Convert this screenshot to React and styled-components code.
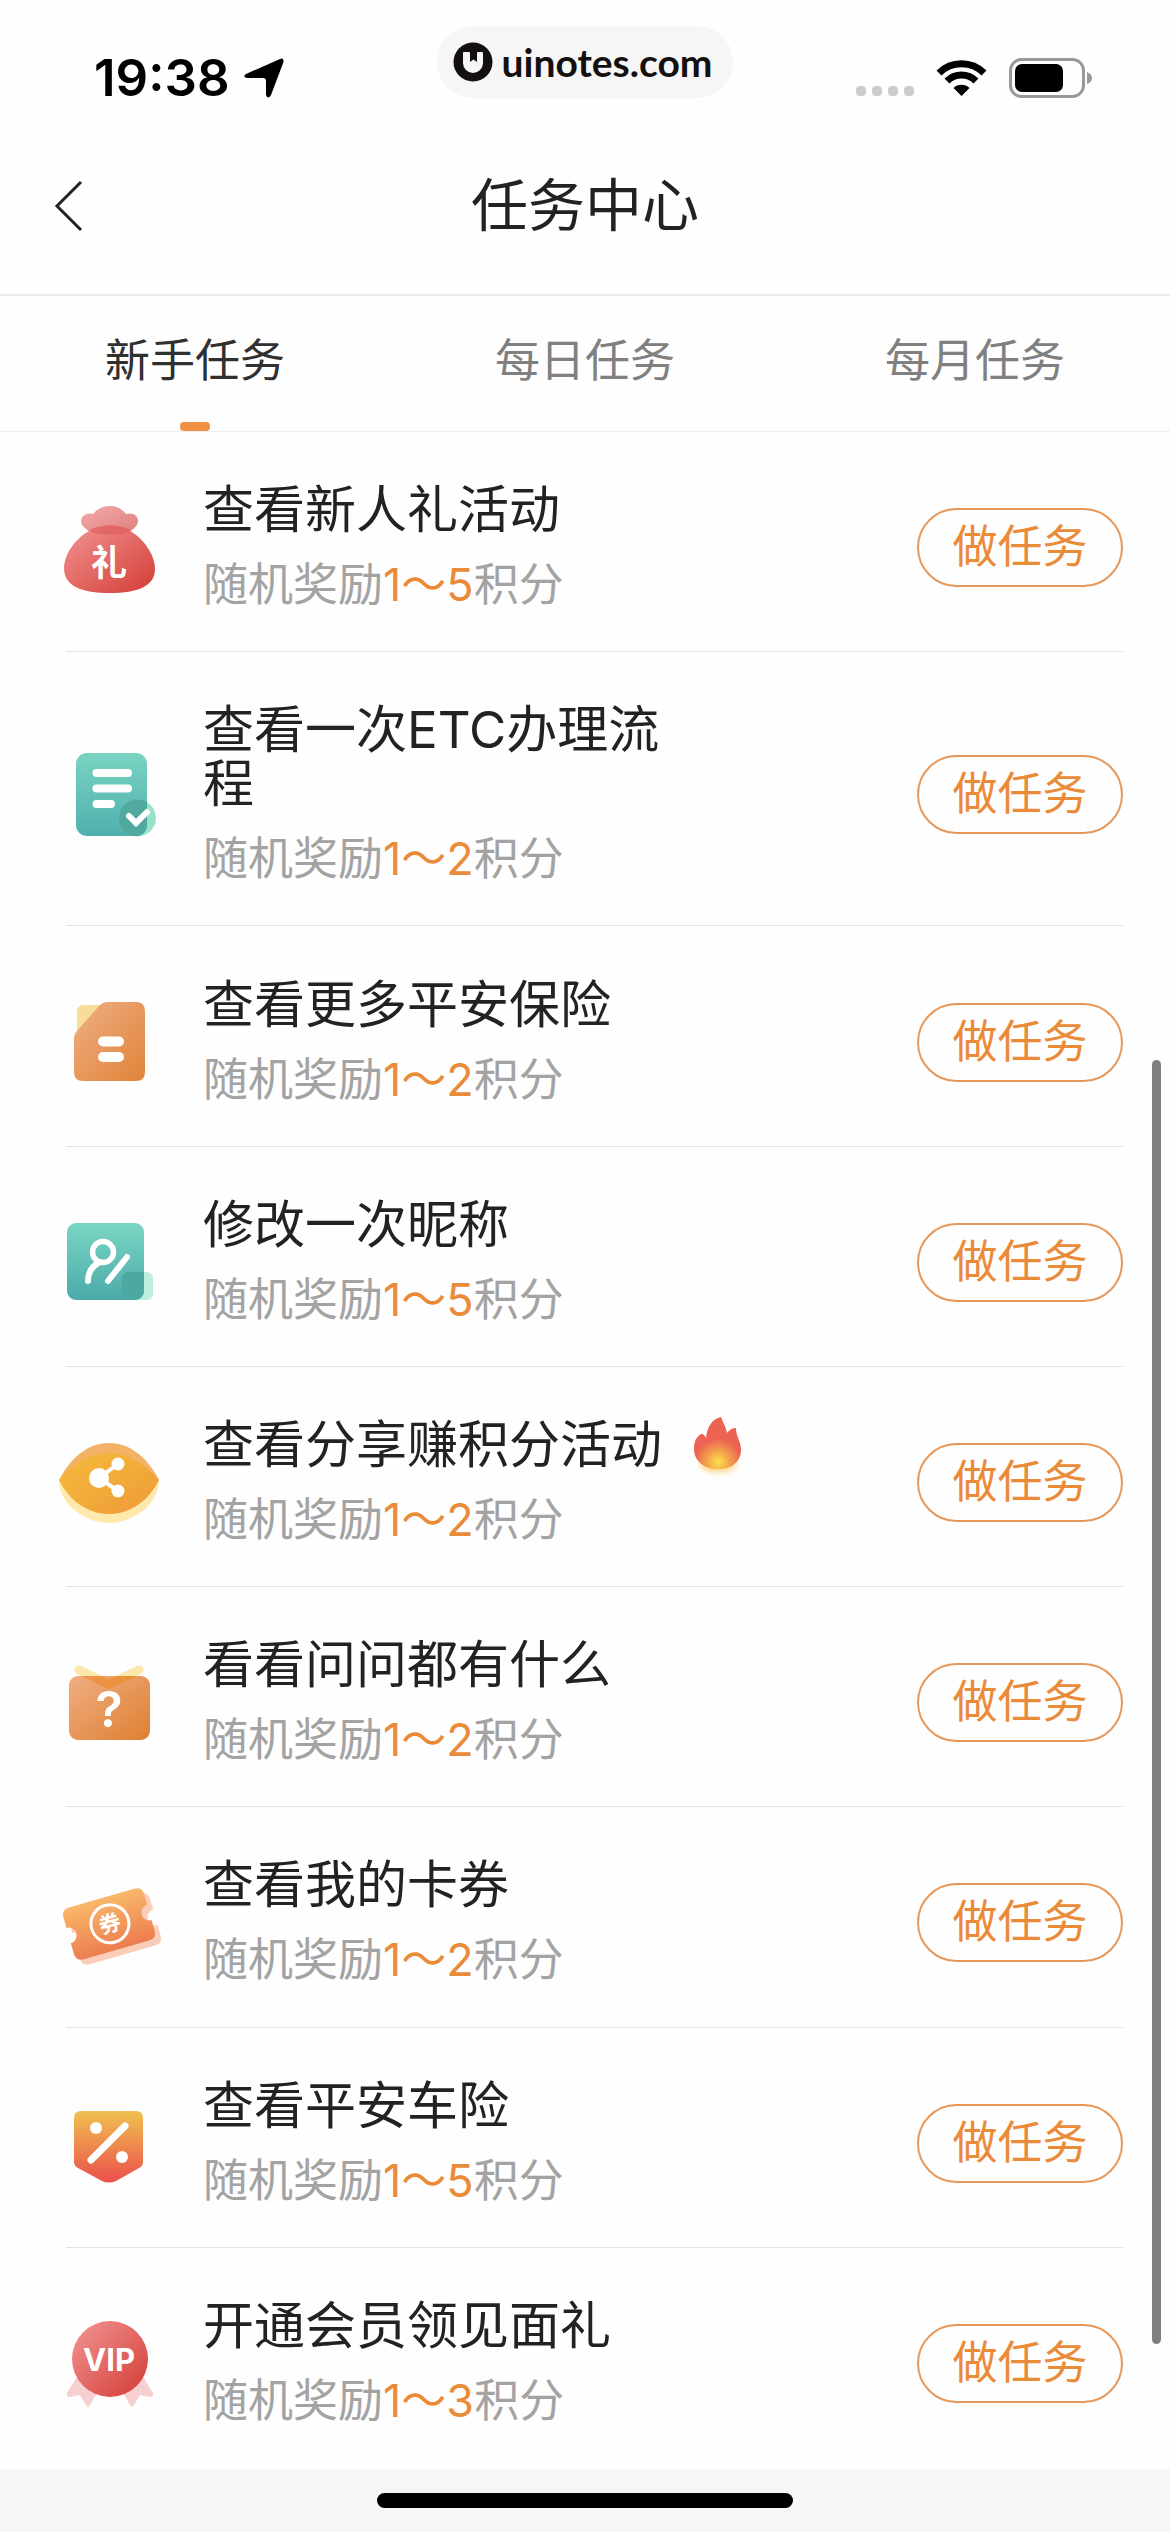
import React from "react";
import styled, { createGlobalStyle } from "styled-components";

const GlobalStyle = createGlobalStyle`
  * { box-sizing: border-box; }
  body {
    margin: 0;
    background: #fefefe;
    font-family: Inter, "Noto Sans CJK SC", sans-serif;
    color: #222;
  }
  button { font: inherit; background: none; border: 0; padding: 0; cursor: pointer; }
  h1, h2, p, ul { margin: 0; padding: 0; font-weight: 400; }
`;

const Page = styled.div`
  position: relative;
  display: flex;
  flex-direction: column;
  min-height: 100vh;
`;

const StatusBar = styled.div`
  display: grid;
  grid-template-columns: 1fr auto 1fr;
  align-items: center;
  height: 124px;
  padding: 0 78px;
`;

const Clock = styled.div`
  display: flex;
  align-items: center;
  gap: 14px;
  padding: 32px 0 0 16px;
  font-size: 51px;
  line-height: 60px;
  font-weight: 600;
  color: #000;
`;

const SiteBadge = styled.div`
  display: flex;
  align-items: center;
  gap: 8px;
  height: 72px;
  padding: 0 20px 0 16px;
  border-radius: 36px;
  background: #f6f6f6;
  color: #151010;
  font: 700 39px/44px Lato, sans-serif;
`;

const Indicators = styled.div`
  display: flex;
  align-items: center;
  justify-content: flex-end;
  gap: 22px;
  padding-top: 32px;
`;

const Header = styled.header`
  display: grid;
  grid-template-columns: 1fr auto 1fr;
  align-items: center;
  height: 172px;
  padding: 0 54px 6px;
  border-bottom: 2px solid #ececec;
`;

const BackButton = styled.button`
  display: flex;
  justify-self: start;
`;

const PageTitle = styled.h1`
  font-size: 57px;
  line-height: 80px;
`;

const Tabs = styled.nav`
  display: grid;
  grid-template-columns: repeat(3, 1fr);
  height: 136px;
  border-bottom: 1px solid #eee;
`;

const Tab = styled.button`
  display: flex;
  flex-direction: column;
  align-items: center;
  justify-content: space-between;
  padding-top: 35px;
  font-size: 45px;
  line-height: 60px;
  color: ${(p) => (p.$active ? "#303030" : "#808080")};

  &::after {
    content: "";
    width: 30px;
    height: 9px;
    border-radius: 4px;
    background: ${(p) => (p.$active ? "#ee9145" : "transparent")};
  }
`;

const TaskList = styled.ul`
  flex: 1;
  display: flex;
  flex-direction: column;
  padding: 0 47px 2px 66px;
  list-style: none;
`;

const TaskRow = styled.li`
  flex: 1 0 auto;
  display: flex;
  align-items: center;
  padding: 51px 0 39px;
  border-bottom: 1px solid #e2e2e2;

  &:last-child { border-bottom-color: transparent; }
`;

const TaskIcon = styled.svg`
  flex: none;
  width: 120px;
  height: 120px;
  margin: -20px 33px -20px -16px;
`;

const TaskInfo = styled.div`
  flex: 1;
  display: flex;
  flex-direction: column;
  gap: 21px;
`;

const TitleLine = styled.div`
  display: flex;
  align-items: center;
  gap: 28px;
`;

const TaskTitle = styled.h2`
  max-width: 480px;
  font-size: 51px;
  line-height: 54px;
`;

const FlameIcon = styled.svg`
  width: 56px;
  height: 64px;
  margin: -4px 0 -6px;
`;

const Reward = styled.p`
  font-size: 45px;
  line-height: 54px;
  color: #a3a3a3;
`;

const Points = styled.span`
  color: #ea8b3a;
`;

const DoTaskButton = styled.button`
  flex: none;
  width: 206px;
  height: 79px;
  padding-bottom: 1px;
  border: 2px solid #e6985a;
  border-radius: 40px;
  font-size: 45px;
  line-height: 60px;
  color: #ea8b3a;
`;

const HomeArea = styled.footer`
  display: flex;
  justify-content: center;
  height: 62px;
  padding-top: 23px;
  background: #f5f7f6;
`;

const HomeIndicator = styled.div`
  width: 416px;
  height: 15px;
  border-radius: 8px;
  background: #000;
`;

const ScrollThumb = styled.div`
  position: absolute;
  top: 1060px;
  right: 9px;
  width: 9px;
  height: 1284px;
  border-radius: 5px;
  background: #808080;
`;

function Gradient({ id, from, to, vertical }) {
  return (
    <linearGradient id={id} x1="0" y1="0" x2={vertical ? "0" : "1"} y2="1">
      <stop offset="0" stopColor={from} />
      <stop offset="1" stopColor={to} />
    </linearGradient>
  );
}

const iconText = {
  fill: "#fff",
  textAnchor: "middle",
  fontFamily: 'Inter, "Noto Sans CJK SC", sans-serif',
};

const icons = {
  gift: (
    <>
      <Gradient id="gift" from="#f29593" to="#d43c36" />
      <Gradient id="giftTop" from="#f3a9a8" to="#dd7f7c" />
      <path d="M60 18C67 18 72 21 76 26C83 24 88 28 88 33C88 39 81 42 77 46C72 50 47 50 43 46C38 42 31 39 31 33C31 28 37 24 43 26C47 21 53 18 60 18Z" fill="url(#giftTop)" />
      <path d="M60 37C84 37 105 62 105 81C105 98 88 105 60 105C31 105 14 98 14 80C14 61 36 37 60 37Z" fill="url(#gift)" />
      <path d="M39 42C50 36 70 36 81 42C75 48 45 48 39 42Z" fill="#d9534f" opacity=".5" />
      <text {...iconText} x="59" y="88" fontSize="36" fontWeight="700">礼</text>
    </>
  ),
  doc: (
    <>
      <Gradient id="doc" from="#7ad3c2" to="#50b0ae" vertical />
      <clipPath id="docClip"><rect x="26" y="18" width="71" height="83" rx="11" /></clipPath>
      <circle cx="87.500" cy="83" r="18.500" fill="#98e2ca" />
      <rect x="26" y="18" width="71" height="83" rx="11" fill="url(#doc)" />
      <circle cx="87.500" cy="83" r="18.500" fill="#50a89e" clipPath="url(#docClip)" />
      <path d="M46.500 38H78M46.500 53.500H78M46.500 69H61" stroke="#fff" strokeWidth="8" strokeLinecap="round" />
      <path d="M79 81L86 88L97 77" fill="none" stroke="#fff" strokeWidth="6" strokeLinecap="round" />
    </>
  ),
  policy: (
    <>
      <Gradient id="policy" from="#efaf84" to="#e08338" />
      <rect x="27" y="23" width="40" height="50" rx="6" fill="#f8dc9c" />
      <path d="M57 20H86Q95 20 95 29V90Q95 99 86 99H33Q24 99 24 90V56Q24 52 27 49L50 23Q53 20 57 20Z" fill="url(#policy)" />
      <path d="M53 59.500H69M53 75H69" stroke="#fff" strokeWidth="10" strokeLinecap="round" />
    </>
  ),
  nickname: (
    <>
      <Gradient id="nick" from="#7ad5c3" to="#4cabaa" vertical />
      <clipPath id="nickClip"><rect x="17" y="21" width="77" height="77" rx="9" /></clipPath>
      <rect x="72" y="70" width="31" height="28" rx="6" fill="#bdeedf" />
      <rect x="17" y="21" width="77" height="77" rx="9" fill="url(#nick)" />
      <rect x="72" y="70" width="31" height="28" rx="6" fill="#4da8a1" clipPath="url(#nickClip)" />
      <g fill="none" stroke="#fff" strokeLinecap="round">
        <circle cx="53" cy="50" r="10.500" strokeWidth="5.500" />
        <path d="M50 60Q38 66 38 79M58 79L77 55" strokeWidth="6" />
      </g>
    </>
  ),
  share: (
    <>
      <Gradient id="share" from="#f5bb3c" to="#ee9a37" />
      <path d="M9 60C11 84 36 101 59 101C82 101 107 84 109 60Z" fill="#fde9ab" />
      <path d="M9 58C22 33 40 21 59 21C78 21 96 33 109 58C94 80 78 88 59 88C40 88 24 80 9 58Z" fill="#f3b266" />
      <path d="M9 58C26 39 42 31 59 31C76 31 92 39 109 58C98 80 79 92 59 92C39 92 20 80 9 58Z" fill="url(#share)" />
      <path d="M68 42L49 56L68 69" fill="none" stroke="#fff" strokeWidth="4" />
      <circle cx="49" cy="56" r="10" fill="#fff" />
      <circle cx="68" cy="42" r="6.500" fill="#fff" />
      <circle cx="68" cy="69" r="6.500" fill="#fff" />
    </>
  ),
  ask: (
    <>
      <Gradient id="ask" from="#f0ae82" to="#de7f31" />
      <clipPath id="askClip"><rect x="19" y="33" width="81" height="64" rx="9" /></clipPath>
      <path d="M29 27L59 41L89 27" fill="none" stroke="#fce8aa" strokeWidth="9" strokeLinecap="round" />
      <rect x="19" y="33" width="81" height="64" rx="9" fill="url(#ask)" />
      <g clipPath="url(#askClip)" fill="none" stroke="#ec8a25" strokeWidth="9" strokeLinecap="round" opacity=".6">
        <path d="M29 27L58 41" />
        <path d="M59 41L89 27" />
      </g>
      <text {...iconText} x="59" y="84" fontSize="50" fontWeight="600">?</text>
    </>
  ),
  coupon: (
    <>
      <Gradient id="coupon" from="#f9b869" to="#ec7d50" vertical />
      <g transform="translate(65 66) rotate(-16)">
        <path d="M-34 -27H34Q42 -27 42 -19V-8A8 8 0 0 0 42 8V19Q42 27 34 27H-34Q-42 27 -42 19V8A8 8 0 0 0 -42 -8V-19Q-42 -27 -34 -27Z" fill="#f9cdb8" />
      </g>
      <g transform="translate(59 61) rotate(-16)">
        <path d="M-34 -27H34Q42 -27 42 -19V-8A8 8 0 0 0 42 8V19Q42 27 34 27H-34Q-42 27 -42 19V8A8 8 0 0 0 -42 -8V-19Q-42 -27 -34 -27Z" fill="url(#coupon)" />
        <circle cx="1" cy="0" r="19" fill="none" stroke="#fff" strokeWidth="3" />
        <text {...iconText} x="1" y="8" fontSize="22" fontWeight="700">券</text>
      </g>
    </>
  ),
  percent: (
    <>
      <Gradient id="pct" from="#f0c150" to="#ea4f4c" vertical />
      <path d="M31 28H86Q93 28 93 35V79Q93 83 89 85L66 98Q59 101 52 98L28 85Q24 83 24 79V35Q24 28 31 28Z" fill="url(#pct)" />
      <path d="M41 77L75 43" stroke="#fff" strokeWidth="7" strokeLinecap="round" />
      <circle cx="46" cy="45" r="6" fill="#fff" />
      <circle cx="72" cy="74" r="6" fill="#fff" />
    </>
  ),
  vip: (
    <>
      <Gradient id="vip" from="#f29795" to="#d33a34" />
      <path d="M28 72L17 90Q16 94 20 94L30 92L36 102Q38 105 40 102L48 88ZM92 72L103 90Q104 94 100 94L90 92L84 102Q82 105 80 102L72 88Z" fill="#f6d0d0" />
      <circle cx="60" cy="56" r="38" fill="url(#vip)" />
      <text {...iconText} x="59" y="68" fontSize="31" fontWeight="700">VIP</text>
    </>
  ),
};

const tasks = [
  { icon: "gift", title: "查看新人礼活动", points: "1～5" },
  { icon: "doc", title: "查看一次ETC办理流程", points: "1～2" },
  { icon: "policy", title: "查看更多平安保险", points: "1～2" },
  { icon: "nickname", title: "修改一次昵称", points: "1～5" },
  { icon: "share", title: "查看分享赚积分活动", points: "1～2", hot: true },
  { icon: "ask", title: "看看问问都有什么", points: "1～2" },
  { icon: "coupon", title: "查看我的卡券", points: "1～2" },
  { icon: "percent", title: "查看平安车险", points: "1～5" },
  { icon: "vip", title: "开通会员领见面礼", points: "1～3" },
];

const tabs = ["新手任务", "每日任务", "每月任务"];

function Flame() {
  return (
    <FlameIcon viewBox="0 0 56 64" aria-hidden="true">
      <defs>
        <radialGradient id="flame" cx="28" cy="48" r="26" gradientUnits="userSpaceOnUse">
          <stop offset="0" stopColor="#fbe14a" />
          <stop offset=".45" stopColor="#f3a04c" />
          <stop offset=".9" stopColor="#ec6253" />
        </radialGradient>
        <filter id="glow" x="-50%" y="-50%" width="200%" height="200%">
          <feGaussianBlur stdDeviation="3" />
        </filter>
      </defs>
      <ellipse cx="28" cy="50" rx="18" ry="8" fill="#fbd27c" filter="url(#glow)" />
      <path d="M31 3C33 9 36 13 37 19C39 16 42 14 46 14C46 23 51 27 51 36C51 48 41 55 28 55C14 55 4 47 4 35C4 28 6 23 11 20C14 20 15 22 16 24C17 13 22 5 31 3Z" fill="url(#flame)" />
    </FlameIcon>
  );
}

export default function App() {
  const [active, setActive] = React.useState(0);
  return (
    <Page>
      <GlobalStyle />
      <StatusBar>
        <Clock>
          19:38
          <svg width="40" height="40" viewBox="0 0 40 40" aria-hidden="true">
            <path d="M36 1Q40 -1 39.500 4L27 37Q24 42 22 37V23Q22 20 19 20H3Q-2 19 2 16Z" fill="#000" />
          </svg>
        </Clock>
        <SiteBadge>
          <svg width="40" height="40" viewBox="0 0 40 40" aria-hidden="true">
            <circle cx="20" cy="20" r="19.500" fill="#151010" />
            <path d="M11 10H16Q17 10 17 11V20L20.500 17.500L24 20V11Q24 10 25 10H29Q30 10 30 11V21A10 10 0 0 1 10 21V11Q10 10 11 10Z" fill="#f6f6f6" />
          </svg>
          uinotes.com
        </SiteBadge>
        <Indicators>
          <svg width="58" height="38" viewBox="0 0 58 38" aria-hidden="true">
            <g fill="#ccc">
              <rect x="0" y="27" width="10" height="10" rx="4" />
              <rect x="16" y="27" width="10" height="10" rx="4" />
              <rect x="32" y="27" width="10" height="10" rx="4" />
              <rect x="48" y="27" width="10" height="10" rx="4" />
            </g>
          </svg>
          <svg width="51" height="38" viewBox="0 0 51 38" aria-hidden="true">
            <g fill="none" stroke="#000" strokeWidth="7">
              <path d="M3 14A32 32 0 0 1 48 14" />
              <path d="M11 22A20.500 20.500 0 0 1 40 22" />
            </g>
            <path d="M25.500 37L17.500 29A11.500 11.500 0 0 1 33.500 29Z" fill="#000" />
          </svg>
          <svg width="83" height="40" viewBox="0 0 83 40" aria-hidden="true">
            <rect x="1.500" y="1.500" width="73" height="37" rx="11" fill="none" stroke="#999" strokeWidth="3" />
            <rect x="6" y="6" width="48" height="28" rx="7" fill="#000" />
            <path d="M78 14Q83 16 83 20Q83 24 78 26Z" fill="#999" />
          </svg>
        </Indicators>
      </StatusBar>

      <Header>
        <BackButton type="button" aria-label="返回">
          <svg width="30" height="52" viewBox="0 0 30 52" aria-hidden="true">
            <path d="M27 2L3 26L27 50" fill="none" stroke="#222" strokeWidth="3" />
          </svg>
        </BackButton>
        <PageTitle>任务中心</PageTitle>
      </Header>

      <Tabs>
        {tabs.map((label, i) => (
          <Tab key={label} type="button" $active={i === active} onClick={() => setActive(i)}>
            {label}
          </Tab>
        ))}
      </Tabs>

      <TaskList>
        {tasks.map((task) => (
          <TaskRow key={task.title}>
            <TaskIcon viewBox="0 0 120 120" aria-hidden="true">{icons[task.icon]}</TaskIcon>
            <TaskInfo>
              <TitleLine>
                <TaskTitle>{task.title}</TaskTitle>
                {task.hot && <Flame />}
              </TitleLine>
              <Reward>
                随机奖励<Points>{task.points}</Points>积分
              </Reward>
            </TaskInfo>
            <DoTaskButton type="button">做任务</DoTaskButton>
          </TaskRow>
        ))}
      </TaskList>

      <HomeArea>
        <HomeIndicator />
      </HomeArea>
      <ScrollThumb />
    </Page>
  );
}
